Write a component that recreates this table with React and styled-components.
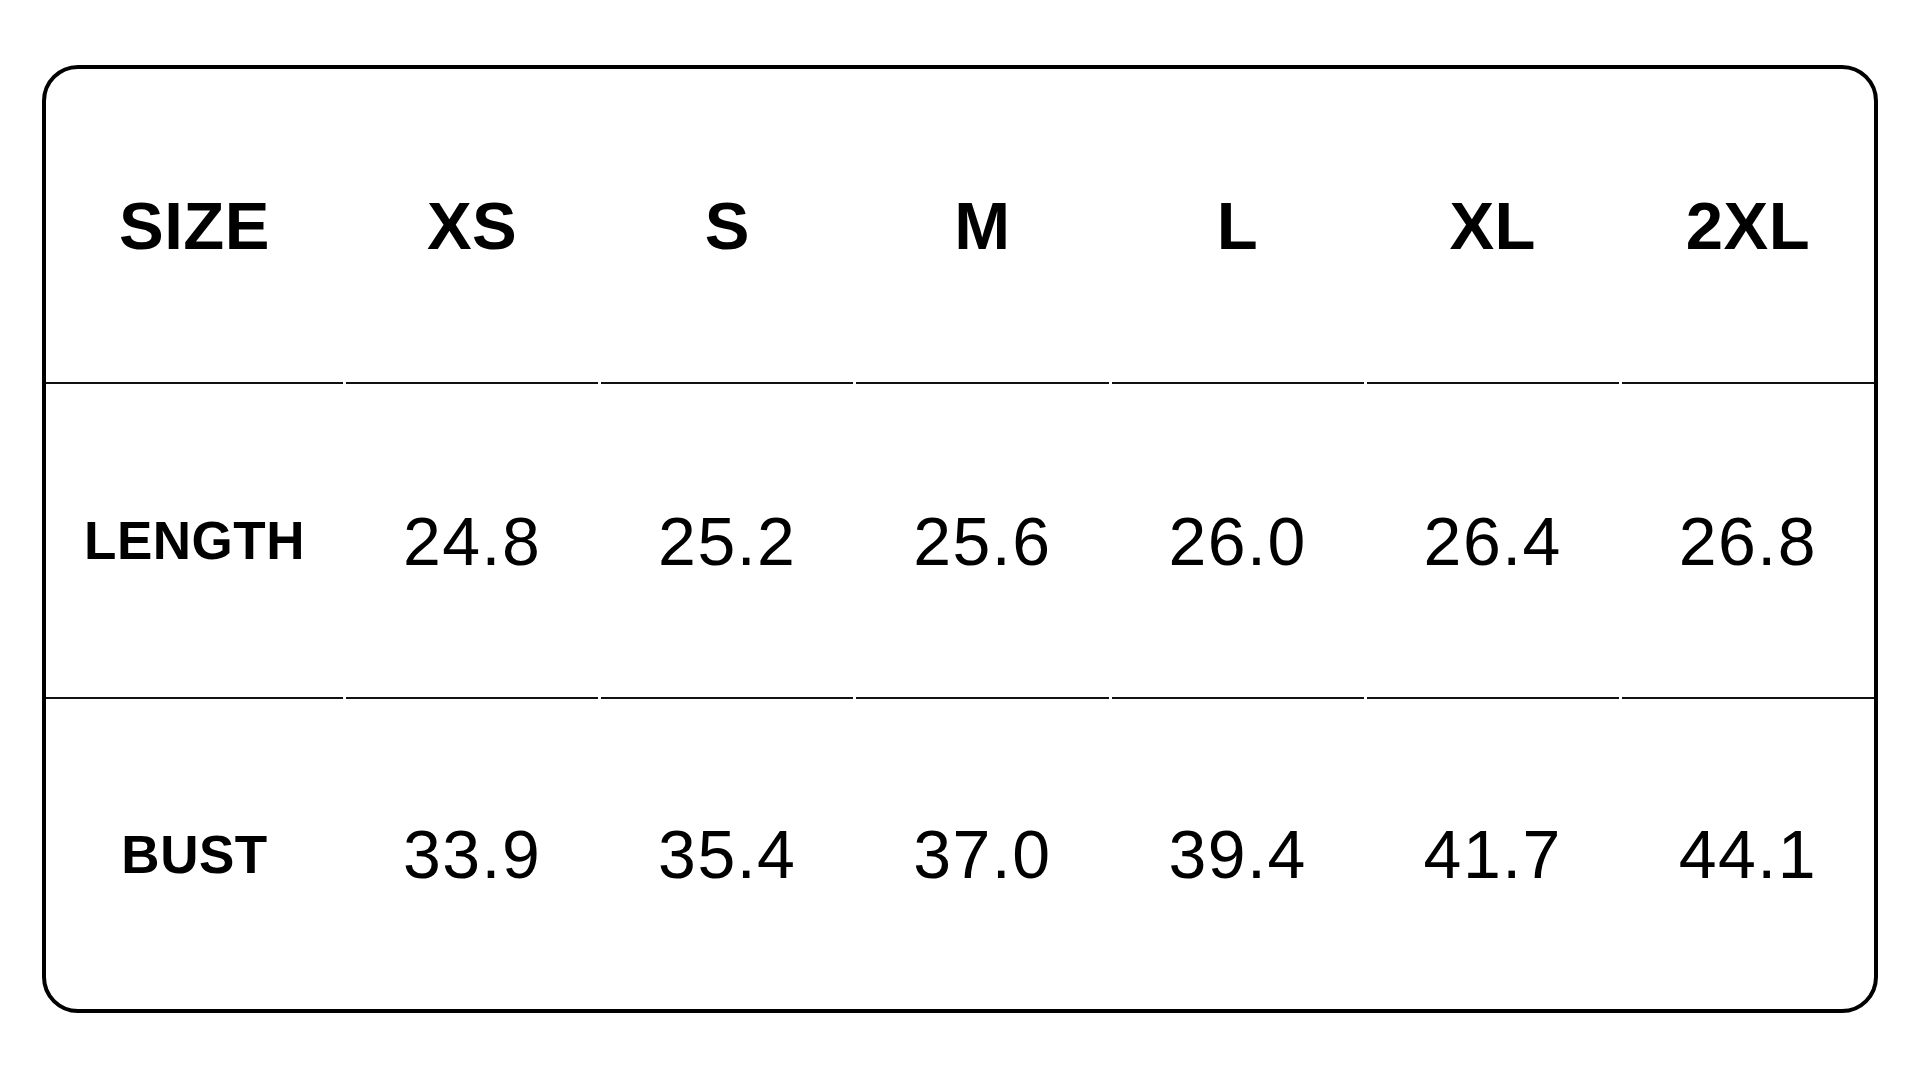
import React from "react";
import styled, { createGlobalStyle } from "styled-components";

const GlobalStyle = createGlobalStyle`
  html, body {
    margin: 0;
    padding: 0;
    background: #fff;
  }
  body {
    font-family: "Liberation Sans", Arial, sans-serif;
    color: #000;
  }
`;

const Page = styled.div`
  width: 1920px;
  height: 1080px;
  box-sizing: border-box;
  padding: 65px 42px 67px 42px;
`;

const Card = styled.div`
  height: 100%;
  box-sizing: border-box;
  border: 4px solid #000;
  border-radius: 36px;
  overflow: hidden;
  display: grid;
  grid-template-columns: 297px repeat(6, 1fr);
  grid-template-rows: 315px 315px 1fr;
  column-gap: 3px;
`;

const Cell = styled.div`
  display: flex;
  align-items: center;
  justify-content: center;
  border-bottom: ${(p) => (p.$last ? "none" : "2px solid #111")};
  font-family: "Liberation Sans", Arial, sans-serif;
  font-size: ${(p) => (p.$label ? "53px" : p.$head ? "67px" : "68px")};
  font-weight: ${(p) => (p.$label || p.$head ? 700 : 400)};
  letter-spacing: ${(p) => (p.$label || p.$head ? "0.5px" : "1.5px")};
  line-height: 1;
  white-space: nowrap;
`;

const sizes = ["XS", "S", "M", "L", "XL", "2XL"];

const rows = [
  { name: "LENGTH", values: ["24.8", "25.2", "25.6", "26.0", "26.4", "26.8"] },
  { name: "BUST", values: ["33.9", "35.4", "37.0", "39.4", "41.7", "44.1"] },
];

export default function App() {
  return (
    <>
      <GlobalStyle />
      <Page>
        <Card>
          <Cell $head>SIZE</Cell>
          {sizes.map((s) => (
            <Cell $head key={s}>
              {s}
            </Cell>
          ))}
          {rows.map((row, i) => {
            const last = i === rows.length - 1;
            return (
              <React.Fragment key={row.name}>
                <Cell $label $last={last}>
                  {row.name}
                </Cell>
                {row.values.map((v, j) => (
                  <Cell $last={last} key={j}>
                    {v}
                  </Cell>
                ))}
              </React.Fragment>
            );
          })}
        </Card>
      </Page>
    </>
  );
}
